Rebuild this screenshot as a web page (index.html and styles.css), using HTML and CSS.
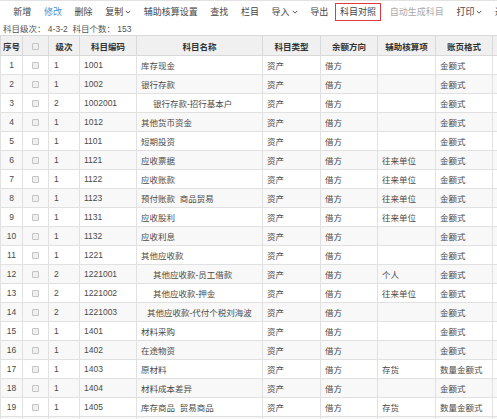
FILE: index.html
```html
<!DOCTYPE html>
<html lang="zh">
<head>
<meta charset="utf-8">
<link rel="stylesheet" href="styles.css">
</head>
<body>
<div class="toolbar">
  <span class="tb">新增</span>
  <span class="tb active">修改</span>
  <span class="tb">删除</span>
  <span class="tb">复制<svg class="caret" viewBox="0 0 8 5"><path d="M1 1l3 3 3-3" fill="none" stroke="#555" stroke-width="1.3"/></svg></span>
  <span class="tb">辅助核算设置</span>
  <span class="tb">查找</span>
  <span class="tb">栏目</span>
  <span class="tb">导入<svg class="caret" viewBox="0 0 8 5"><path d="M1 1l3 3 3-3" fill="none" stroke="#555" stroke-width="1.3"/></svg></span>
  <span class="tb">导出</span>
  <span class="tb boxed">科目对照</span>
  <span class="tb disabled">自动生成科目</span>
  <span class="tb">打印<svg class="caret" viewBox="0 0 8 5"><path d="M1 1l3 3 3-3" fill="none" stroke="#555" stroke-width="1.3"/></svg></span>
  <span class="tb">返回</span>
</div>
<div class="info">科目级次： 4-3-2&nbsp;&nbsp;科目个数： 153</div>
<table class="grid">
  <colgroup>
    <col class="c-no"><col class="c-chk"><col class="c-lv"><col class="c-code"><col class="c-name"><col class="c-type"><col class="c-dir"><col class="c-aux"><col class="c-fmt"><col class="c-more">
  </colgroup>
  <thead>
    <tr>
      <th>序号</th><th><span class="chk"></span></th><th>级次</th><th>科目编码</th><th>科目名称</th><th>科目类型</th><th>余额方向</th><th>辅助核算项</th><th>账页格式</th><th></th>
    </tr>
  </thead>
  <tbody>
    <tr><td class="no">1</td><td class="ck"><span class="chk"></span></td><td class="lv">1</td><td>1001</td><td>库存现金</td><td>资产</td><td>借方</td><td></td><td>金额式</td><td></td></tr>
    <tr><td class="no">2</td><td class="ck"><span class="chk"></span></td><td class="lv">1</td><td>1002</td><td>银行存款</td><td>资产</td><td>借方</td><td></td><td>金额式</td><td></td></tr>
    <tr><td class="no">3</td><td class="ck"><span class="chk"></span></td><td class="lv">2</td><td>1002001</td><td class="sub">银行存款-招行基本户</td><td>资产</td><td>借方</td><td></td><td>金额式</td><td></td></tr>
    <tr><td class="no">4</td><td class="ck"><span class="chk"></span></td><td class="lv">1</td><td>1012</td><td>其他货币资金</td><td>资产</td><td>借方</td><td></td><td>金额式</td><td></td></tr>
    <tr><td class="no">5</td><td class="ck"><span class="chk"></span></td><td class="lv">1</td><td>1101</td><td>短期投资</td><td>资产</td><td>借方</td><td></td><td>金额式</td><td></td></tr>
    <tr><td class="no">6</td><td class="ck"><span class="chk"></span></td><td class="lv">1</td><td>1121</td><td>应收票据</td><td>资产</td><td>借方</td><td>往来单位</td><td>金额式</td><td></td></tr>
    <tr><td class="no">7</td><td class="ck"><span class="chk"></span></td><td class="lv">1</td><td>1122</td><td>应收账款</td><td>资产</td><td>借方</td><td>往来单位</td><td>金额式</td><td></td></tr>
    <tr><td class="no">8</td><td class="ck"><span class="chk"></span></td><td class="lv">1</td><td>1123</td><td>预付账款&nbsp;&nbsp;商品贸易</td><td>资产</td><td>借方</td><td>往来单位</td><td>金额式</td><td></td></tr>
    <tr><td class="no">9</td><td class="ck"><span class="chk"></span></td><td class="lv">1</td><td>1131</td><td>应收股利</td><td>资产</td><td>借方</td><td>往来单位</td><td>金额式</td><td></td></tr>
    <tr><td class="no">10</td><td class="ck"><span class="chk"></span></td><td class="lv">1</td><td>1132</td><td>应收利息</td><td>资产</td><td>借方</td><td></td><td>金额式</td><td></td></tr>
    <tr><td class="no">11</td><td class="ck"><span class="chk"></span></td><td class="lv">1</td><td>1221</td><td>其他应收款</td><td>资产</td><td>借方</td><td></td><td>金额式</td><td></td></tr>
    <tr><td class="no">12</td><td class="ck"><span class="chk"></span></td><td class="lv">2</td><td>1221001</td><td class="sub">其他应收款-员工借款</td><td>资产</td><td>借方</td><td>个人</td><td>金额式</td><td></td></tr>
    <tr><td class="no">13</td><td class="ck"><span class="chk"></span></td><td class="lv">2</td><td>1221002</td><td class="sub">其他应收款-押金</td><td>资产</td><td>借方</td><td>往来单位</td><td>金额式</td><td></td></tr>
    <tr><td class="no">14</td><td class="ck"><span class="chk"></span></td><td class="lv">2</td><td>1221003</td><td class="sub2">其他应收款-代付个税刘海波</td><td>资产</td><td>借方</td><td></td><td>金额式</td><td></td></tr>
    <tr><td class="no">15</td><td class="ck"><span class="chk"></span></td><td class="lv">1</td><td>1401</td><td>材料采购</td><td>资产</td><td>借方</td><td></td><td>金额式</td><td></td></tr>
    <tr><td class="no">16</td><td class="ck"><span class="chk"></span></td><td class="lv">1</td><td>1402</td><td>在途物资</td><td>资产</td><td>借方</td><td></td><td>金额式</td><td></td></tr>
    <tr><td class="no">17</td><td class="ck"><span class="chk"></span></td><td class="lv">1</td><td>1403</td><td>原材料</td><td>资产</td><td>借方</td><td>存货</td><td>数量金额式</td><td></td></tr>
    <tr><td class="no">18</td><td class="ck"><span class="chk"></span></td><td class="lv">1</td><td>1404</td><td>材料成本差异</td><td>资产</td><td>借方</td><td></td><td>金额式</td><td></td></tr>
    <tr><td class="no">19</td><td class="ck"><span class="chk"></span></td><td class="lv">1</td><td>1405</td><td>库存商品&nbsp;&nbsp;贸易商品</td><td>资产</td><td>借方</td><td>存货</td><td>数量金额式</td><td></td></tr>
    <tr class="blank"><td></td><td></td><td></td><td></td><td></td><td></td><td></td><td></td><td></td><td></td></tr>
  </tbody>
</table>
</body>
</html>
```

FILE: styles.css
```css
html, body {
  margin: 0;
  padding: 0;
  background: #fff;
  overflow: hidden;
}
body {
  width: 497px;
  height: 419px;
  font-family: "Liberation Sans", "Noto Sans CJK SC", sans-serif;
  color: #333;
}
.toolbar {
  display: flex;
  align-items: center;
  height: 23px;
  border-top: 1px solid #e2e2e2;
  box-sizing: border-box;
  padding-left: 7px;
  white-space: nowrap;
  overflow: hidden;
}
.tb {
  display: inline-flex;
  align-items: center;
  font-size: 9px;
  line-height: 16px;
  padding: 0 6.3px;
  color: #444;
}
.tb.active { color: #4a8fd6; }
.tb.disabled { color: #aaa; }
.tb.boxed {
  border: 1.5px solid #e0393e;
  padding: 0 3.5px;
  margin-left: 1px;
  margin-right: 3px;
  line-height: 16px;
}
.caret {
  width: 6px;
  height: 4px;
  margin-left: 2px;
}
.info {
  height: 12px;
  line-height: 12px;
  font-size: 8.5px;
  color: #555;
  padding-left: 3px;
}
.grid {
  border-collapse: collapse;
  table-layout: fixed;
  width: 560px;
  font-size: 8.5px;
}
.c-no { width: 22px; }
.c-chk { width: 26px; }
.c-lv { width: 31px; }
.c-code { width: 57px; }
.c-name { width: 126px; }
.c-type { width: 58px; }
.c-dir { width: 57px; }
.c-aux { width: 58px; }
.c-fmt { width: 57px; }
.c-more { width: 68px; }
.grid th {
  height: 19px;
  background: #f0f0f0;
  border: 1px solid #d9d9d9;
  font-weight: bold;
  font-size: 8.5px;
  color: #333;
  text-align: center;
  padding: 0;
}
.grid td {
  height: 18px;
  border: 1px solid #e1e1e1;
  padding: 0 0 0 4px;
  white-space: nowrap;
  overflow: hidden;
  color: #4a4a4a;
}
.grid tbody tr:nth-child(even) td { background: #f8f8f8; }
.grid td.no { text-align: center; padding: 0; }
.grid td.ck { text-align: center; padding: 0; }
.grid td.lv { padding-left: 5px; }
.grid td.sub { padding-left: 16px; }
.grid td.sub2 { padding-left: 10px; }
.chk {
  display: inline-block;
  width: 5px;
  height: 5px;
  border: 1px solid #c4c4c4;
  background: #efefef;
  border-radius: 1px;
  vertical-align: middle;
}
```
